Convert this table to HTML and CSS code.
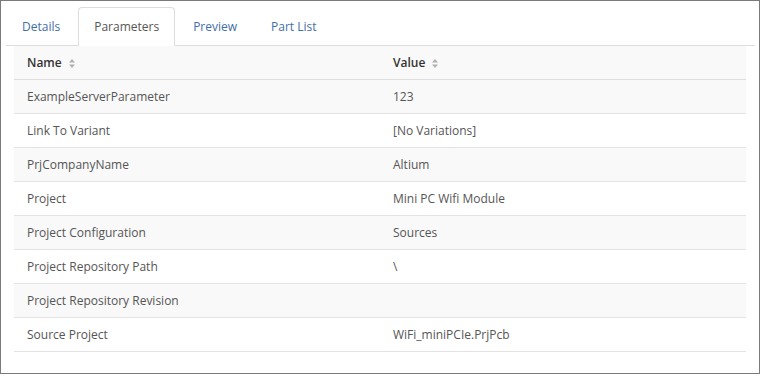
FILE: index.html
```html
<!DOCTYPE html>
<html lang="en">

<head>
     <meta charset="UTF-8">
     <meta name="viewport" content="width=device-width, initial-scale=1.0">
     <title>Parameters</title>
     <link rel="stylesheet" href="styles.css">
</head>

<body>
     <div class="panel">
          <ul class="tabs">
               <li><a href="#">Details</a></li>
               <li class="active"><a href="#">Parameters</a></li>
               <li><a href="#">Preview</a></li>
               <li><a href="#">Part List</a></li>
          </ul>

          <table class="params">
               <thead>
                    <tr>
                         <th>Name <svg class="sort" width="6" height="9" viewBox="0 0 6 9"><path d="M3 0L6 3.5H0Z M3 9L0 5.5H6Z" /></svg></th>
                         <th>Value <svg class="sort" width="6" height="9" viewBox="0 0 6 9"><path d="M3 0L6 3.5H0Z M3 9L0 5.5H6Z" /></svg></th>
                    </tr>
               </thead>
               <tbody>
                    <tr><td>ExampleServerParameter</td><td>123</td></tr>
                    <tr><td>Link To Variant</td><td>[No Variations]</td></tr>
                    <tr><td>PrjCompanyName</td><td>Altium</td></tr>
                    <tr><td>Project</td><td>Mini PC Wifi Module</td></tr>
                    <tr><td>Project Configuration</td><td>Sources</td></tr>
                    <tr><td>Project Repository Path</td><td>\</td></tr>
                    <tr><td>Project Repository Revision</td><td></td></tr>
                    <tr><td>Source Project</td><td>WiFi_miniPCIe.PrjPcb</td></tr>
               </tbody>
          </table>
     </div>
</body>

</html>
```

FILE: styles.css
```css
* {
     box-sizing: border-box;
}

body {
     font-family: "Open Sans", Arial, sans-serif;
     font-size: 12px;
     margin: 0;
     padding: 0;
     background-color: #fff;
     color: #555;
}

.panel {
     height: 374px;
     border: 1px solid #7a7a7a;
     padding: 6px 4px 0 5px;
}

.tabs {
     list-style: none;
     margin: 0;
     padding: 0;
     display: flex;
     border-bottom: 1px solid #ddd;
}

.tabs li {
     margin-right: 2px;
     margin-bottom: -1px;
}

.tabs a {
     display: block;
     padding: 10px 15px 10px;
     line-height: 17px;
     color: #3f6fa6;
     text-decoration: none;
     border: 1px solid transparent;
     border-radius: 4px 4px 0 0;
}

.tabs .active a {
     color: #555;
     background-color: #fff;
     border-color: #ddd;
     border-bottom-color: #fff;
}

.params {
     width: calc(100% - 17px);
     margin-left: 8px;
     border-collapse: collapse;
}

.params th,
.params td {
     width: 50%;
     padding: 8px 13px;
     line-height: 17px;
     text-align: left;
     border-bottom: 1px solid #e3e3e3;
}

.params th {
     color: #333;
     font-weight: 600;
     background-color: #f9f9f9;
     border-bottom-color: #ddd;
}

.params tbody tr:nth-child(odd) {
     background-color: #f9f9f9;
}

.sort {
     fill: #b0b0b0;
     margin-left: 4px;
     vertical-align: -1px;
}
```
